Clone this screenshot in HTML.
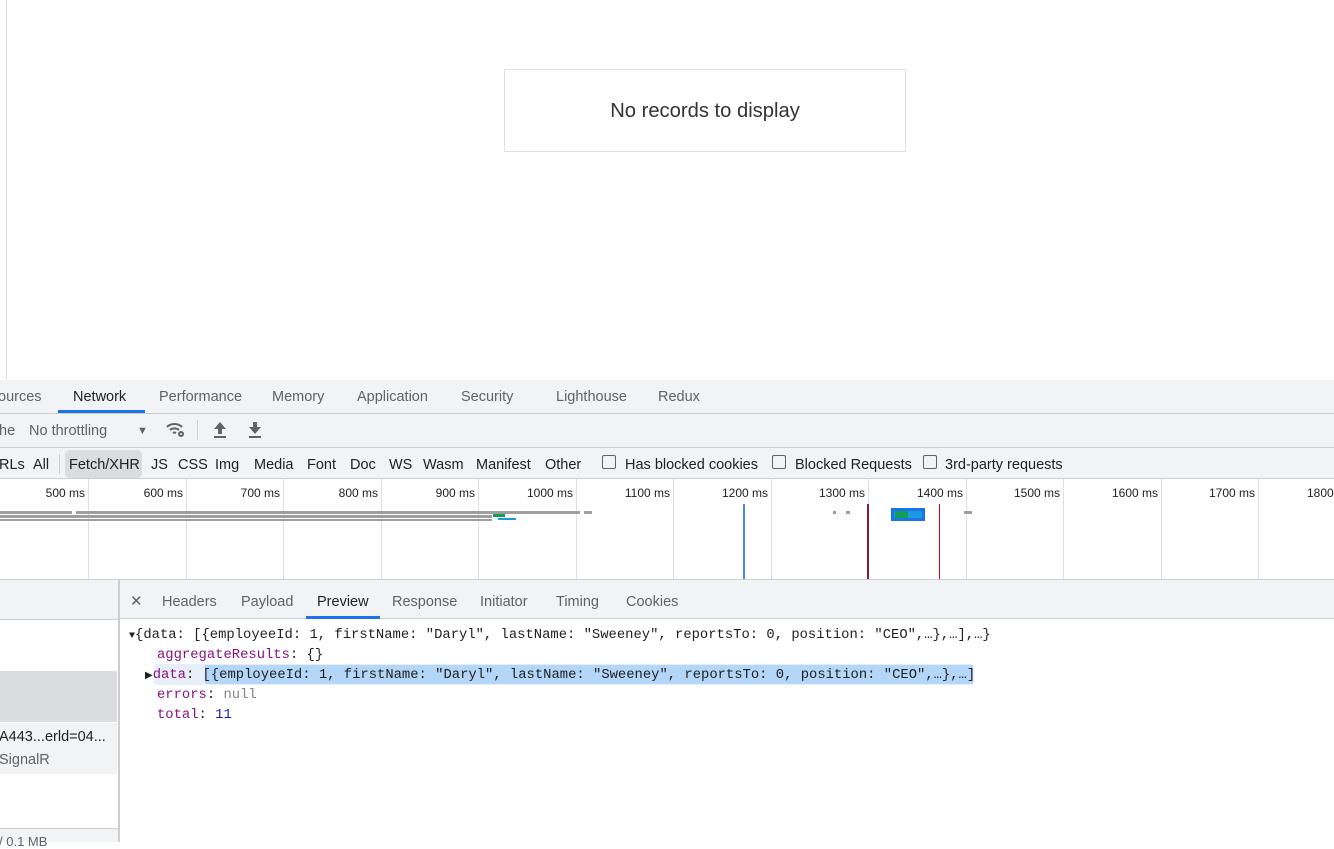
<!DOCTYPE html>
<html><head><style>
*{margin:0;padding:0;box-sizing:border-box}
body{width:1334px;height:842px;overflow:hidden;background:#fff;font-family:"Liberation Sans",sans-serif;font-size:13.5px;color:#202124;position:relative}
.a{position:absolute;white-space:nowrap}
.mono{font-family:"Liberation Mono",monospace;font-size:13.85px}
</style></head><body>
<div class="a" style="left:6px;top:0;width:1px;height:380px;background:#e0e0e0"></div>
<div class="a" style="left:504px;top:69px;width:402px;height:83px;border:1px solid #dee2e6;font-size:20.2px;color:#333;text-align:center;line-height:83px">No records to display</div>

<!-- tab bar -->
<div class="a" style="left:0;top:380px;width:1334px;height:34px;background:#f1f3f4;border-bottom:1px solid #cbcdd1"></div>
<div class="a" style="top:389px;left:-2px;color:#5f6368;font-size:14.5px">ources</div>
<div class="a" style="top:389px;left:73px;color:#202124;font-size:14.5px">Network</div>
<div class="a" style="left:58px;top:410px;width:87px;height:3px;background:#1a73e8"></div>
<div class="a" style="top:389px;left:159px;color:#5f6368;font-size:14.5px">Performance</div>
<div class="a" style="top:389px;left:272px;color:#5f6368;font-size:14.5px">Memory</div>
<div class="a" style="top:389px;left:357px;color:#5f6368;font-size:14.5px">Application</div>
<div class="a" style="top:389px;left:461px;color:#5f6368;font-size:14.5px">Security</div>
<div class="a" style="top:389px;left:556px;color:#5f6368;font-size:14.5px">Lighthouse</div>
<div class="a" style="top:389px;left:658px;color:#5f6368;font-size:14.5px">Redux</div>

<!-- toolbar -->
<div class="a" style="left:0;top:414px;width:1334px;height:34px;background:#f1f3f4;border-bottom:1px solid #cbcdd1"></div>
<div class="a" style="top:423px;left:-1px;color:#5f6368;font-size:14.5px">he</div>
<div class="a" style="top:423px;left:29px;color:#5f6368;font-size:14.5px">No throttling</div>
<div class="a" style="left:137px;color:#5f6368;font-size:11px;top:425px">▼</div>
<svg class="a" style="left:164px;top:420px" width="24" height="20" viewBox="0 0 24 20"><path d="M3 7a11 11 0 0 1 15 0M6 10a7 7 0 0 1 9 0M9 13a3 3 0 0 1 3 0" stroke="#5f6368" stroke-width="2" fill="none"/><circle cx="17" cy="14" r="3" fill="#5f6368"/><circle cx="17" cy="14" r="1" fill="#f1f3f4"/></svg>
<div class="a" style="left:197px;top:420px;width:1px;height:20px;background:#cbcdd1"></div>
<svg class="a" style="left:212px;top:421px" width="16" height="18"><path d="M8 1L2 8h4v5h4V8h4z" fill="#5f6368"/><rect x="2" y="15" width="12" height="2" fill="#5f6368"/></svg>
<svg class="a" style="left:247px;top:421px" width="16" height="18"><path d="M8 13L2 6h4V1h4v5h4z" fill="#5f6368"/><rect x="2" y="15" width="12" height="2" fill="#5f6368"/></svg>

<!-- filter bar -->
<div class="a" style="left:0;top:448px;width:1334px;height:31px;background:#f1f3f4;border-bottom:1px solid #cbcdd1"></div>
<div class="a" style="top:457px;left:-1px;font-size:14.5px">RLs</div>
<div class="a" style="top:457px;left:33px;font-size:14.5px">All</div>
<div class="a" style="left:59px;top:454px;width:1px;height:20px;background:#cbcdd1"></div>
<div class="a" style="left:65px;top:450px;width:77px;height:28px;background:#dadce0;border-radius:5px"></div>
<div class="a" style="top:457px;left:69px;font-size:14.5px">Fetch/XHR</div>
<div class="a" style="top:457px;left:151px;font-size:14.5px">JS</div>
<div class="a" style="top:457px;left:178px;font-size:14.5px">CSS</div>
<div class="a" style="top:457px;left:215px;font-size:14.5px">Img</div>
<div class="a" style="top:457px;left:254px;font-size:14.5px">Media</div>
<div class="a" style="top:457px;left:307px;font-size:14.5px">Font</div>
<div class="a" style="top:457px;left:350px;font-size:14.5px">Doc</div>
<div class="a" style="top:457px;left:389px;font-size:14.5px">WS</div>
<div class="a" style="top:457px;left:423px;font-size:14.5px">Wasm</div>
<div class="a" style="top:457px;left:476px;font-size:14.5px">Manifest</div>
<div class="a" style="top:457px;left:545px;font-size:14.5px">Other</div>
<div class="a" style="left:602px;top:455px;width:14px;height:14px;border:1.5px solid #5f6368;border-radius:2px"></div>
<div class="a" style="top:457px;left:625px;font-size:14.5px">Has blocked cookies</div>
<div class="a" style="left:772px;top:455px;width:14px;height:14px;border:1.5px solid #5f6368;border-radius:2px"></div>
<div class="a" style="top:457px;left:795px;font-size:14.5px">Blocked Requests</div>
<div class="a" style="left:923px;top:455px;width:14px;height:14px;border:1.5px solid #5f6368;border-radius:2px"></div>
<div class="a" style="top:457px;left:945px;font-size:14.5px">3rd-party requests</div>

<!-- timeline -->
<div id="tl"></div>
<div class="a" style="left:0;top:579px;width:1334px;height:1px;background:#cbcdd1"></div>
<div class="a" style="left:0;top:511px;width:72px;height:3px;background:#9e9e9e"></div>
<div class="a" style="left:76px;top:511px;width:504px;height:3px;background:#9e9e9e"></div>
<div class="a" style="left:584px;top:511px;width:8px;height:3px;background:#9e9e9e"></div>
<div class="a" style="left:0;top:515px;width:492px;height:3px;background:#9e9e9e"></div>
<div class="a" style="left:0;top:519px;width:492px;height:2px;background:#9e9e9e"></div>
<div class="a" style="left:493px;top:514px;width:12px;height:3px;background:#0f9d58"></div>
<div class="a" style="left:498px;top:518px;width:18px;height:2px;background:#1a9ae0"></div>
<div class="a" style="left:743px;top:504px;width:2px;height:75px;background:#4a86e8"></div>
<div class="a" style="left:867px;top:504px;width:2px;height:75px;background:#8b1a30"></div>
<div class="a" style="left:939px;top:504px;width:1px;height:75px;background:#d0021b"></div>
<div class="a" style="left:833px;top:511px;width:3px;height:3px;background:#9e9e9e"></div>
<div class="a" style="left:846px;top:511px;width:4px;height:3px;background:#9e9e9e"></div>
<div class="a" style="left:964px;top:511px;width:8px;height:3px;background:#9e9e9e"></div>
<div class="a" style="left:891px;top:508px;width:34px;height:13px;background:#1a73e8"></div>
<div class="a" style="left:894px;top:511px;width:28px;height:7px;background:#1a9ae0"></div>
<div class="a" style="left:895px;top:511px;width:13px;height:7px;background:#0f9d58"></div>

<!-- lower -->
<div class="a" style="left:0;top:580px;width:119px;height:40px;background:#f1f3f4;border-bottom:1px solid #cbcdd1"></div>
<div class="a" style="left:0;top:671px;width:117px;height:51px;background:#dadce0"></div>
<div class="a" style="left:0;top:723px;width:117px;height:51px;background:#f1f3f4"></div>
<div class="a" style="top:729px;left:-1px;font-size:14.5px">A443...erld=04...</div>
<div class="a" style="top:752px;left:-1px;font-size:14.5px;color:#5f6368">SignalR</div>
<div class="a" style="left:0;top:828px;width:119px;height:14px;background:#f1f3f4;border-top:1px solid #cbcdd1"></div>
<div class="a" style="top:834px;left:-1px;font-size:13px;color:#5f6368">/ 0.1 MB</div>
<div class="a" style="left:118px;top:580px;width:2px;height:262px;background:#cbcdd1"></div>

<div class="a" style="left:120px;top:580px;width:1214px;height:39px;background:#f1f3f4;border-bottom:1px solid #cbcdd1"></div>
<div class="a" style="top:592px;left:130px;font-size:15px;color:#5f6368">✕</div>
<div class="a" style="top:594px;left:162px;font-size:14.5px;color:#5f6368">Headers</div>
<div class="a" style="top:594px;left:241px;font-size:14.5px;color:#5f6368">Payload</div>
<div class="a" style="top:594px;left:317px;font-size:14.5px">Preview</div>
<div class="a" style="left:306px;top:616px;width:74px;height:3px;background:#1a73e8"></div>
<div class="a" style="top:594px;left:392px;font-size:14.5px;color:#5f6368">Response</div>
<div class="a" style="top:594px;left:480px;font-size:14.5px;color:#5f6368">Initiator</div>
<div class="a" style="top:594px;left:556px;font-size:14.5px;color:#5f6368">Timing</div>
<div class="a" style="top:594px;left:626px;font-size:14.5px;color:#5f6368">Cookies</div>

<div class="a" style="left:154px;top:664px;width:820px;height:21px;background:#e8eef7;border-radius:3px"></div>
<div class="a" style="left:205px;top:665px;width:768px;height:19px;background:#b4d6f8"></div>
<div class="a mono" style="top:627px;left:129px"><span style="font-size:10px">▼</span>{data: [{employeeId: 1, firstName: "Daryl", lastName: "Sweeney", reportsTo: 0, position: "CEO",…},…],…}</div>
<div class="a mono" style="top:647px;left:157px"><span style="color:#881280">aggregateResults</span>: {}</div>
<div class="a mono" style="top:667px;left:145px"><span style="font-size:10px">▶</span><span style="color:#881280">data</span>: [{employeeId: 1, firstName: "Daryl", lastName: "Sweeney", reportsTo: 0, position: "CEO",…},…]</div>
<div class="a mono" style="top:687px;left:157px"><span style="color:#881280">errors</span>: <span style="color:#80868b">null</span></div>
<div class="a mono" style="top:707px;left:157px"><span style="color:#881280">total</span>: <span style="color:#1a1aa6">11</span></div>

<script>
var h='';var labels=[500,600,700,800,900,1000,1100,1200,1300,1400,1500,1600,1700,1800];
for(var i=0;i<14;i++){var x=Math.round(88+i*97.5);
h+='<div class="a" style="left:'+x+'px;top:479px;width:1px;height:100px;background:#e0e0e0"></div>';
h+='<div class="a" style="left:'+(x-100)+'px;width:97px;text-align:right;top:486px;font-size:12px;color:#202124">'+labels[i]+' ms</div>';}
document.getElementById('tl').innerHTML=h;
</script>
</body></html>
